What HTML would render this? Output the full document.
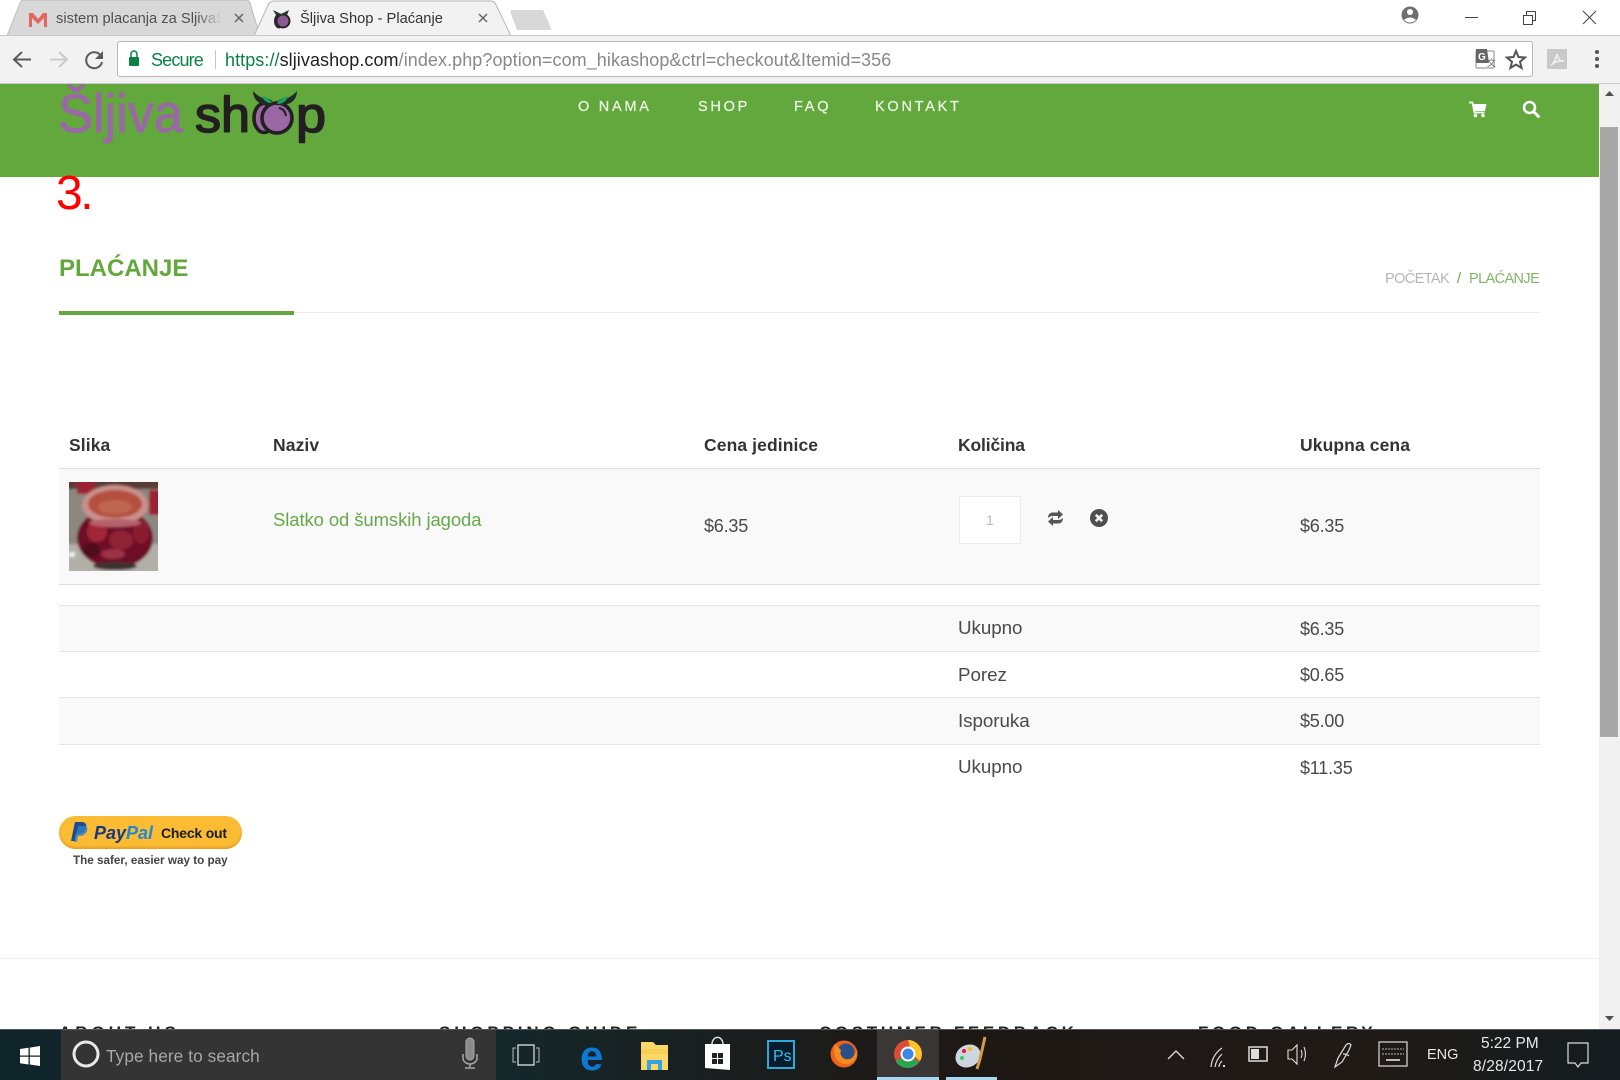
<!DOCTYPE html>
<html><head><meta charset="utf-8"><title>Šljiva Shop - Plaćanje</title>
<style>
html,body{margin:0;padding:0;width:1620px;height:1080px;overflow:hidden;background:#fff;font-family:"Liberation Sans",sans-serif}
.a{position:absolute}
.t{position:absolute;white-space:nowrap;line-height:1;color:#3a3a3a}
svg{position:absolute;overflow:visible}
.h{font-weight:bold;font-size:17.5px;color:#333;top:437px;letter-spacing:.1px}
.v{font-size:18px;color:#4a4a4a;letter-spacing:-.2px}
.w{font-size:18.800px;color:#4a4a4a;letter-spacing:-.05px}
.f{font-weight:bold;font-size:17px;letter-spacing:3.650px;color:#222;top:1024px}
.n{font-size:14.500px;letter-spacing:2.750px;color:#eef4e8;top:100px;-webkit-text-stroke:.25px #eef4e8}
.r{left:59px;width:1481px;box-sizing:border-box;border-bottom:1px solid #e4e4e4}
</style></head><body>

<!-- page -->
<div class="a" style="left:0;top:84px;width:1599px;height:93px;background:#62a83c"></div>

<svg style="left:0;top:0" width="400" height="180">
 <text x="58" y="132" font-family="Liberation Sans" font-size="54" fill="#9a68a4" stroke="#9a68a4" stroke-width=".9" textLength="125" lengthAdjust="spacingAndGlyphs">Šljiva</text>
 <text x="195" y="132" font-family="Liberation Sans" font-size="50" fill="#231f20" stroke="#231f20" stroke-width="1.600" stroke-linejoin="round" textLength="55" lengthAdjust="spacingAndGlyphs">sh</text>
 <text x="296" y="132" font-family="Liberation Sans" font-size="50" fill="#231f20" stroke="#231f20" stroke-width="1.600" stroke-linejoin="round" textLength="30" lengthAdjust="spacingAndGlyphs">p</text>
 <ellipse cx="264" cy="118" rx="10" ry="14.500" fill="#9a68a4" stroke="#231f20" stroke-width="3.600"/>
 <circle cx="277" cy="118" r="15" fill="#9a68a4" stroke="#231f20" stroke-width="3.600"/>
 <path d="M279 108q6 1 7 8" fill="none" stroke="#231f20" stroke-width="2"/>
 <path d="M253 91q8 9 17 8 3 3 4 6-13 1-18-5-3-4-3-9z" fill="#1f2a24"/>
 <path d="M297 91q-8 9-17 8-3 3-4 6 13 1 18-5 3-4 3-9z" fill="#1f2a24"/>
 <path d="M262 96q7 1 10 7-8 0-10-7zM288 97q-8 0-11 7 8 0 11-7z" fill="#1da060"/>
</svg>

<div class="t n" style="left:578px">O NAMA</div>
<div class="t n" style="left:698px">SHOP</div>
<div class="t n" style="left:794px">FAQ</div>
<div class="t n" style="left:875px">KONTAKT</div>
<svg style="left:1469px;top:101px" width="18" height="17" viewBox="0 0 18 17"><path d="M0 1.500h3.500l2 10h10" fill="none" stroke="#fff" stroke-width="1.800"/><path d="M4 3h13.500l-1.500 7H5.500z" fill="#fff"/><circle cx="6.500" cy="14.500" r="1.800" fill="#fff"/><circle cx="14" cy="14.500" r="1.800" fill="#fff"/></svg>
<svg style="left:1522px;top:100px" width="18" height="18" viewBox="0 0 18 18"><circle cx="7.500" cy="7.500" r="5.500" fill="none" stroke="#fff" stroke-width="2.600"/><path d="M11.500 11.500L16.500 16.500" stroke="#fff" stroke-width="3" stroke-linecap="round"/></svg>

<div class="t" style="left:56px;top:170px;font-size:48px;color:#f00;letter-spacing:-2.500px">3.</div>
<div class="t" style="left:59px;top:257px;font-size:24px;font-weight:bold;color:#62a83c">PLAĆANJE</div>
<div class="t" style="left:1385px;top:272px;font-size:14.500px;letter-spacing:-.6px;color:#b5b5b5">POČETAK</div>
<div class="t" style="left:1457px;top:272px;font-size:14.500px;color:#62a83c">/</div>
<div class="t" style="left:1469px;top:272px;font-size:14.500px;letter-spacing:-.6px;color:#82b568">PLAĆANJE</div>
<div class="a" style="left:59px;top:312px;width:1481px;height:1px;background:#ebebeb"></div>
<div class="a" style="left:59px;top:311px;width:235px;height:4px;background:#62a83c"></div>

<div class="t h" style="left:69px">Slika</div>
<div class="t h" style="left:273px">Naziv</div>
<div class="t h" style="left:704px">Cena jedinice</div>
<div class="t h" style="left:958px;letter-spacing:-.15px">Količina</div>
<div class="t h" style="left:1300px">Ukupna cena</div>

<div class="a" style="left:59px;top:468px;width:1481px;height:117px;box-sizing:border-box;background:#f9f9f9;border-top:1px solid #dedede;border-bottom:1px solid #dedede"></div>

<svg style="left:69px;top:482px" width="89" height="89" viewBox="0 0 89 89">
 <defs><filter id="b" x="-5%" y="-5%" width="110%" height="110%"><feGaussianBlur stdDeviation="1.300"/></filter><clipPath id="c"><rect width="89" height="89"/></clipPath></defs>
 <g clip-path="url(#c)"><g filter="url(#b)">
 <rect x="-3" y="-3" width="95" height="95" fill="#8c8880"/>
 <rect x="-3" y="-3" width="95" height="10" fill="#5a3a34"/>
 <rect x="8" y="-2" width="18" height="14" fill="#9c2230"/>
 <rect x="80" y="8" width="12" height="25" fill="#9e2232"/>
 <rect x="-3" y="62" width="95" height="30" fill="#b2aea8"/>
 <rect x="0" y="70" width="6" height="5" fill="#eee"/>
 <ellipse cx="46" cy="56" rx="38" ry="30" fill="#6e1026"/>
 <ellipse cx="28" cy="50" rx="10" ry="10" fill="#a32538"/>
 <ellipse cx="52" cy="58" rx="12" ry="10" fill="#8f2036"/>
 <ellipse cx="72" cy="50" rx="8" ry="12" fill="#8a1a30"/>
 <ellipse cx="44" cy="72" rx="12" ry="5" fill="#9c3244"/>
 <ellipse cx="22" cy="68" rx="9" ry="7" fill="#4e0a1e"/>
 <ellipse cx="46" cy="84" rx="22" ry="4" fill="#3d3030"/>
 <ellipse cx="46" cy="23" rx="33" ry="20" fill="#c9908c"/>
 <ellipse cx="46" cy="22" rx="27" ry="14" fill="#b5503f"/>
 <ellipse cx="46" cy="25" rx="17" ry="7" fill="#c06650"/>
 <ellipse cx="46" cy="41" rx="26" ry="4" fill="#b5626c"/>
 </g></g>
</svg>
<div class="t" style="left:273px;top:511px;font-size:18.500px;letter-spacing:-.1px;color:#66a84a">Slatko od šumskih jagoda</div>
<div class="t v" style="left:704px;top:517px">$6.35</div>
<div class="a" style="left:959px;top:496px;width:62px;height:48px;box-sizing:border-box;background:#fff;border:1px solid #eee"></div>
<div class="t" style="left:986px;top:513px;font-size:14px;color:#b5bbc0">1</div>
<svg style="left:1047px;top:509px" width="17" height="18" viewBox="0 0 17 18"><path d="M1 9c0-3.500 2-5.500 4.500-5.500H11V1l5 4.500-5 4.500V7H6.500C4 7 2.500 7.500 1 9zM16 9c0 3.500-2 5.500-4.500 5.500H6V17l-5-4.500L6 8v3h4.500C13 11 14.500 10.500 16 9z" fill="#555"/></svg>
<svg style="left:1090px;top:509px" width="18" height="18" viewBox="0 0 18 18"><circle cx="9" cy="9" r="9" fill="#4f4f4f"/><path d="M5.800 5.800l6.400 6.400M12.200 5.800l-6.400 6.400" stroke="#f5f5f5" stroke-width="2.600"/></svg>
<div class="t v" style="left:1300px;top:517px">$6.35</div>

<div class="a r" style="top:605px;height:47px;background:#f9f9f9;border-top:1px solid #e4e4e4"></div>
<div class="a r" style="top:652px;height:46px"></div>
<div class="a r" style="top:698px;height:47px;background:#f9f9f9"></div>
<div class="t w" style="left:958px;top:619px">Ukupno</div><div class="t v" style="left:1300px;top:620px">$6.35</div>
<div class="t w" style="left:958px;top:666px">Porez</div><div class="t v" style="left:1300px;top:666px">$0.65</div>
<div class="t w" style="left:958px;top:712px">Isporuka</div><div class="t v" style="left:1300px;top:712px">$5.00</div>
<div class="t w" style="left:958px;top:758px">Ukupno</div><div class="t v" style="left:1300px;top:759px">$11.35</div>

<div class="a" style="left:59px;top:816px;width:183px;height:33px;border-radius:17px;background:#fbbc34;box-shadow:inset 0 -2px 2px #e89f20"></div>
<svg style="left:71px;top:822px" width="17" height="21" viewBox="0 0 17 21"><path d="M4 0h6c5 0 6 3 5 6-1 4-4 6-8 6H5l-1 7H0z" fill="#1b4a92"/><path d="M7 4h6c3 0 4 2 3 5-1 3-4 5-7 5H7l-1 6H3z" fill="#2a7fc8" opacity=".8"/></svg>
<div class="t" style="left:94px;top:824px;font-size:18px;font-weight:bold;font-style:italic;color:#17397f">Pay<span style="color:#2588cc">Pal</span></div>
<div class="t" style="left:161px;top:826px;font-size:14px;font-weight:bold;color:#1c1c1c;letter-spacing:-.2px">Check out</div>
<div class="t" style="left:73px;top:855px;font-size:11.700px;font-weight:bold;color:#444">The safer, easier way to pay</div>

<div class="a" style="left:0;top:958px;width:1600px;height:1px;background:#eee"></div>
<div class="t f" style="left:59px;letter-spacing:4px">ABOUT US</div>
<div class="t f" style="left:439px;letter-spacing:3.850px">SHOPPING GUIDE</div>
<div class="t f" style="left:819px">COSTUMER FEEDBACK</div>
<div class="t f" style="left:1198px">FOOD GALLERY</div>

<!-- scrollbar -->
<div class="a" style="left:1599px;top:84px;width:21px;height:945px;background:#f1f1f1"></div>
<div class="a" style="left:1600px;top:127px;width:18px;height:610px;background:#a8a8a8"></div>
<svg style="left:1600px;top:83px" width="20" height="946"><path d="M5 13l4.500-5 4.500 5z" fill="#505050"/><path d="M5 933l4.500 5 4.500-5z" fill="#505050"/></svg>

<!-- tabs -->
<div class="a" style="left:0;top:0;width:1620px;height:36px;background:#fff"></div>
<svg style="left:0;top:0" width="580" height="37">
 <path d="M7 36L20 3q1-3 5-3H245q4 0 5 3L260 36z" fill="#d8d8d8" stroke="#bcbcbc"/>
 <path d="M254 36L268 5q2-4 6-4H490q5 0 6 4L511 36z" fill="#f2f2f2" stroke="#b5b5b5"/>
 <path d="M510 11q0-1 2-1h31l8 18q1 2-2 2H517z" fill="#d8d8d8"/>
 <path d="M30 13h3l5 6 5-6h4v14h-3V18l-6 6-6-6v9h-2z" fill="#e0685c"/><path d="M29 13v14h3V13z" fill="#e0685c"/>
 <ellipse cx="279" cy="21" rx="5" ry="7.500" fill="#332b30"/><circle cx="283" cy="21" r="6.500" fill="#8a5a94" stroke="#2b2428" stroke-width="2"/>
 <path d="M273 10l8 4 8-4-2 5h-11z" fill="#24382b"/>
 <path d="M235 14l8 8M243 14l-8 8M479 14l8 8M487 14l-8 8" stroke="#666" stroke-width="1.500"/>
</svg>
<div class="t" style="left:56px;top:12px;font-size:14.700px;color:#505050;width:166px;overflow:hidden;-webkit-mask-image:linear-gradient(90deg,#000 85%,transparent 100%)">sistem placanja za SljivaS</div>
<div class="t" style="left:300px;top:12px;font-size:14.700px;color:#333">Šljiva Shop - Plaćanje</div>
<svg style="left:1395px;top:0" width="225" height="36">
 <circle cx="15" cy="15" r="8.500" fill="#6e6e6e"/><circle cx="15" cy="12" r="3" fill="#fff"/><path d="M9 20q6-5 12 0-6 5-12 0z" fill="#fff"/>
 <path d="M70 17.500h13" stroke="#444"/>
 <path d="M128.500 15.500h9v9h-9zM131.500 15v-3.500h9v9H138" fill="none" stroke="#444"/>
 <path d="M188 11l13 13M201 11l-13 13" stroke="#444"/>
</svg>

<!-- toolbar -->
<div class="a" style="left:0;top:35px;width:1620px;height:49px;box-sizing:border-box;background:#f2f2f2;border-top:1px solid #c8c8c8;border-bottom:1px solid #c8c8c8"></div>
<div class="a" style="left:117px;top:41px;width:1416px;height:36px;box-sizing:border-box;background:#fff;border:1px solid #b8b8b8;border-radius:3px"></div>
<svg style="left:0;top:36px" width="220" height="48">
 <path d="M31 23.500H15M22 16l-8 7.500 8 7.500" fill="none" stroke="#5a5a5a" stroke-width="2"/>
 <path d="M66 23.500H50M59 16l8 7.500-8 7.500" fill="none" stroke="#c9c9c9" stroke-width="2"/>
 <path d="M101 20a8 8 0 1 0 1 6" fill="none" stroke="#5a5a5a" stroke-width="2"/><path d="M103 15v8h-8z" fill="#5a5a5a"/>
 <rect x="129" y="21" width="10" height="9" rx="1" fill="#0b8043"/><path d="M131 21v-3a3 3 0 0 1 6 0v3" fill="none" stroke="#0b8043" stroke-width="1.500"/>
 <path d="M215.500 14v19" stroke="#c4c4c4"/>
</svg>
<div class="t" style="left:151px;top:51px;font-size:18px;color:#0b8043;letter-spacing:-.85px">Secure</div>
<div class="t" style="left:225px;top:51px;font-size:18px;color:#888;letter-spacing:.07px"><span style="color:#0b8043">https://</span><span style="color:#222">sljivashop.com</span>/index.php?option=com_hikashop&amp;ctrl=checkout&amp;Itemid=356</div>
<svg style="left:1470px;top:44px" width="150" height="32">
 <rect x="6" y="7" width="18" height="17" rx="1" fill="#fff" stroke="#888"/><path d="M6 5h11l2 14H6z" fill="#666"/>
 <text x="8" y="16" font-family="Liberation Sans" font-weight="bold" font-size="10" fill="#fff">G</text>
 <text x="17" y="22" font-family="Liberation Sans" font-size="9" fill="#666">文</text>
 <path d="M46 7l2.500 6 6.500.5-5 4.200 1.600 6.300-5.600-3.400-5.600 3.400 1.600-6.300-5-4.200 6.500-.5z" fill="none" stroke="#555" stroke-width="2"/>
 <rect x="77" y="5" width="20" height="20" fill="#c9c9c9"/><path d="M81 21q4-2 6-11 2 8 7 7-8-1-13 4z" fill="none" stroke="#f3f3f3" stroke-width="1.500"/>
 <circle cx="127" cy="8" r="2" fill="#555"/><circle cx="127" cy="15" r="2" fill="#555"/><circle cx="127" cy="22" r="2" fill="#555"/>
</svg>

<!-- taskbar -->
<div class="a" style="left:0;top:1029px;width:1620px;height:51px;background:linear-gradient(90deg,#10252a 0,#14282c 30%,#1a1e1e 45%,#1e1815 60%,#1f1a16 85%,#141c20 100%);border-top:1px solid #555;box-sizing:border-box"></div>
<div class="a" style="left:61px;top:1030px;width:435px;height:50px;background:#343434"></div>
<svg style="left:0;top:1029px" width="1620" height="51">
 <path d="M20 20l8.500-1.200v7.700H20zM29.800 18.600L40 17v9.500H29.800zM20 27.800h8.500v7.700L20 34.300zM29.800 27.800H40V37l-10.200-1.500z" fill="#fff"/>
 <circle cx="86" cy="25" r="12" fill="none" stroke="#e8e8e8" stroke-width="3"/>
 <path d="M466 13a4 4 0 0 1 8 0v14a4 4 0 0 1-8 0z" fill="#8a8a8a" stroke="#aaa"/><path d="M463 25v4a7 6 0 0 0 14 0v-4M470 35v3M465 39h10" fill="none" stroke="#aaa" stroke-width="1.500"/>
 <path d="M518 16h16v20h-16z" fill="none" stroke="#e8e8e8" stroke-width="1.200"/><path d="M516 19h-3v14h3M536 19h3v14h-3" fill="none" stroke="#bbb"/>
 <text x="580" y="41" font-family="Liberation Sans" font-weight="bold" font-size="42" fill="#0f78d4">e</text>
 <path d="M641 13h12l3 3h12v25h-27z" fill="#fbd66a"/><path d="M641 20h27v5h-27z" fill="#f5c542" opacity=".5"/><path d="M647 41V31h15v10h-4v-6h-7v6z" fill="#32a5dc"/>
 <path d="M705 15h25v26l-25-2z" fill="#fff"/><path d="M712 15a5 6 0 0 1 11 0" fill="none" stroke="#ddd" stroke-width="1.500"/><path d="M712 24h5v5h-5zM718 24h5v5h-5zM712 30h5v5h-5zM718 30h5v5h-5z" fill="#222"/>
 <rect x="768" y="12" width="26" height="27" fill="#061c2c" stroke="#2fa8d8" stroke-width="2"/><text x="773" y="32" font-family="Liberation Sans" font-size="16" fill="#2fc0f0">Ps</text>
 <circle cx="844" cy="25" r="13.500" fill="#e9641f"/><circle cx="846" cy="23" r="8.500" fill="#2b4d88"/><path d="M835 15q-3 12 4 18 8 5 15-1 4-6 3-12-3 12-12 10-6-3-4-9z" fill="#f58a1e"/>
 <rect x="877" y="1" width="62" height="50" fill="#fff" opacity=".13"/>
 <circle cx="908" cy="25" r="14" fill="#dc4a38"/><path d="M908 25L919 33A14 14 0 0 1 896 33L896 32z" fill="#2ea44f"/><path d="M908 11A14 14 0 0 1 920 32L912 25z" fill="#fbc42a"/><circle cx="908" cy="25" r="6.500" fill="#3f86e4" stroke="#fff" stroke-width="2"/>
 <ellipse cx="968" cy="27" rx="13" ry="11" fill="#cdd6de" transform="rotate(-30 968 27)"/><circle cx="964" cy="22" r="2" fill="#e14"/><circle cx="970" cy="20" r="2" fill="#fb0"/><circle cx="962" cy="29" r="2" fill="#3c6"/><path d="M985 8l-5 22-3 10" stroke="#d49a4a" stroke-width="3" fill="none"/>
 <rect x="877" y="48" width="62" height="3" fill="#a6d8f4"/><rect x="946" y="48" width="51" height="3" fill="#a6d8f4"/>
 <path d="M1168 30l8-8 8 8" fill="none" stroke="#e0e0e0" stroke-width="1.300"/>
 <path d="M1211 38q1-12 11-19M1215 38q1-7 7-13M1219 38q0-3 3-6" fill="none" stroke="#ddd" stroke-width="1.200"/><rect x="1223" y="36" width="2" height="2" fill="#ddd"/>
 <rect x="1249" y="18" width="18" height="14" fill="none" stroke="#ddd" stroke-width="1.500"/><rect x="1251" y="20" width="8" height="10" fill="#ddd"/>
 <path d="M1288 21h4l5-5v19l-5-5h-4zM1301 21q2 4 0 8M1304 18q3 7 0 14" fill="none" stroke="#ddd" stroke-width="1.100"/>
 <path d="M1335 38l3-9 8-13q3-3 5 0l-2 5-7 12z M1343 25q4 0 6 2" fill="none" stroke="#ddd" stroke-width="1.200"/>
 <rect x="1379" y="13" width="28" height="24" fill="none" stroke="#ddd" stroke-width="1.200"/><path d="M1382 20h22M1382 25h22" stroke="#bbb" stroke-dasharray="2 1"/><path d="M1386 31h14" stroke="#eee" stroke-width="1.500"/>
 <path d="M1568 14h20v20h-7l-3 4-3-4h-7z" fill="none" stroke="#ddd" stroke-width="1.200"/>
</svg>
<div class="t" style="left:106px;top:1048px;font-size:17.200px;color:#a8a8a8;letter-spacing:.1px">Type here to search</div>
<div class="t" style="left:1427px;top:1048px;font-size:14.500px;color:#e8e8e8">ENG</div>
<div class="t" style="left:1481px;top:1036px;font-size:15.500px;color:#e8e8e8">5:22 PM</div>
<div class="t" style="left:1473px;top:1059px;font-size:15.500px;color:#e8e8e8;letter-spacing:.15px">8/28/2017</div>
</body></html>
